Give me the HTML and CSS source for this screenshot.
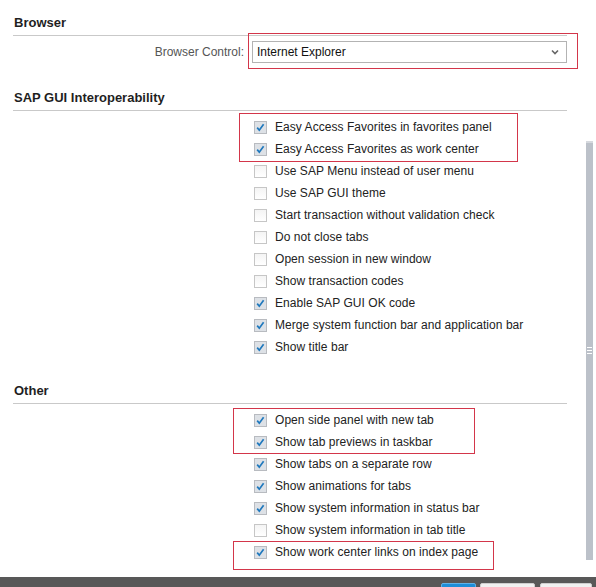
FILE: index.html
```html
<!DOCTYPE html>
<html lang="en">
<head>
<meta charset="utf-8">
<title>Settings</title>
<link rel="stylesheet" href="styles.css">
</head>
<body>
<div class="page">
  <main class="content">
    <section class="sec">
      <h2 class="sec-title">Browser</h2>
      <div class="sec-body">
        <div class="field">
          <label class="field-label">Browser Control:</label>
          <div class="select">
            <span>Internet Explorer</span>
            <svg class="chev" width="8" height="6" viewBox="0 0 8 6"><path d="M1 1.5 L4 4.5 L7 1.5" fill="none" stroke="#666" stroke-width="1.6"/></svg>
          </div>
        </div>
      </div>
    </section>

    <section class="sec">
      <h2 class="sec-title">SAP GUI Interoperability</h2>
      <div class="sec-body checks">
        <div class="check"><span class="cb on"><svg viewBox="0 0 11 11"><path d="M2.2 5.6 L4.3 8.2 L8.6 2.2" fill="none" stroke="#1f78bd" stroke-width="1.7"/></svg></span><span>Easy Access Favorites in favorites panel</span></div>
        <div class="check"><span class="cb on"><svg viewBox="0 0 11 11"><path d="M2.2 5.6 L4.3 8.2 L8.6 2.2" fill="none" stroke="#1f78bd" stroke-width="1.7"/></svg></span><span>Easy Access Favorites as work center</span></div>
        <div class="check"><span class="cb"></span><span>Use SAP Menu instead of user menu</span></div>
        <div class="check"><span class="cb"></span><span>Use SAP GUI theme</span></div>
        <div class="check"><span class="cb"></span><span>Start transaction without validation check</span></div>
        <div class="check"><span class="cb"></span><span>Do not close tabs</span></div>
        <div class="check"><span class="cb"></span><span>Open session in new window</span></div>
        <div class="check"><span class="cb"></span><span>Show transaction codes</span></div>
        <div class="check"><span class="cb on"><svg viewBox="0 0 11 11"><path d="M2.2 5.6 L4.3 8.2 L8.6 2.2" fill="none" stroke="#1f78bd" stroke-width="1.7"/></svg></span><span>Enable SAP GUI OK code</span></div>
        <div class="check"><span class="cb on"><svg viewBox="0 0 11 11"><path d="M2.2 5.6 L4.3 8.2 L8.6 2.2" fill="none" stroke="#1f78bd" stroke-width="1.7"/></svg></span><span>Merge system function bar and application bar</span></div>
        <div class="check"><span class="cb on"><svg viewBox="0 0 11 11"><path d="M2.2 5.6 L4.3 8.2 L8.6 2.2" fill="none" stroke="#1f78bd" stroke-width="1.7"/></svg></span><span>Show title bar</span></div>
      </div>
    </section>

    <section class="sec">
      <h2 class="sec-title">Other</h2>
      <div class="sec-body checks">
        <div class="check"><span class="cb on"><svg viewBox="0 0 11 11"><path d="M2.2 5.6 L4.3 8.2 L8.6 2.2" fill="none" stroke="#1f78bd" stroke-width="1.7"/></svg></span><span>Open side panel with new tab</span></div>
        <div class="check"><span class="cb on"><svg viewBox="0 0 11 11"><path d="M2.2 5.6 L4.3 8.2 L8.6 2.2" fill="none" stroke="#1f78bd" stroke-width="1.7"/></svg></span><span>Show tab previews in taskbar</span></div>
        <div class="check"><span class="cb on"><svg viewBox="0 0 11 11"><path d="M2.2 5.6 L4.3 8.2 L8.6 2.2" fill="none" stroke="#1f78bd" stroke-width="1.7"/></svg></span><span>Show tabs on a separate row</span></div>
        <div class="check"><span class="cb on"><svg viewBox="0 0 11 11"><path d="M2.2 5.6 L4.3 8.2 L8.6 2.2" fill="none" stroke="#1f78bd" stroke-width="1.7"/></svg></span><span>Show animations for tabs</span></div>
        <div class="check"><span class="cb on"><svg viewBox="0 0 11 11"><path d="M2.2 5.6 L4.3 8.2 L8.6 2.2" fill="none" stroke="#1f78bd" stroke-width="1.7"/></svg></span><span>Show system information in status bar</span></div>
        <div class="check"><span class="cb"></span><span>Show system information in tab title</span></div>
        <div class="check"><span class="cb on"><svg viewBox="0 0 11 11"><path d="M2.2 5.6 L4.3 8.2 L8.6 2.2" fill="none" stroke="#1f78bd" stroke-width="1.7"/></svg></span><span>Show work center links on index page</span></div>
      </div>
    </section>
  </main>

  <footer class="footer">
    <span class="btn primary"></span>
    <span class="btn wide"></span>
    <span class="btn"></span>
  </footer>

  <div class="scrollbar"><span class="grip"></span></div>

  <div class="mark mark-1"></div>
  <div class="mark mark-2"></div>
  <div class="mark mark-3"></div>
  <div class="mark mark-4"></div>
</div>
</body>
</html>
```

FILE: styles.css
```css
* { box-sizing: border-box; }

html, body {
  margin: 0;
  padding: 0;
  background: #ffffff;
}

body {
  font-family: "Liberation Sans", Arial, sans-serif;
  font-size: 12px;
  color: #222;
}

.page {
  position: relative;
  width: 596px;
  height: 587px;
  overflow: hidden;
  display: flex;
  flex-direction: column;
}

.content {
  flex: 1 1 0;
  min-height: 0;
  overflow: hidden;
  padding: 15px 0 0 13px;
}

.sec {
  width: 554px;
  margin-bottom: 25px;
}

.sec-title {
  margin: 0;
  font-size: 13px;
  font-weight: bold;
  line-height: 16px;
  color: #1f1f1f;
  padding: 0 0 4px 1px;
  border-bottom: 1px solid #c9c9c9;
}

.sec-body {
  margin-top: 5px;
}

.field {
  display: grid;
  grid-template-columns: 231px 315px;
  column-gap: 8px;
  align-items: start;
  min-height: 24px;
}

.field-label {
  text-align: right;
  color: #555;
  line-height: 22px;
}

.select {
  height: 22px;
  border: 1px solid #b3b3b3;
  background: #fff;
  display: flex;
  align-items: center;
  justify-content: space-between;
  padding: 0 7px 0 4px;
  color: #111;
}

.chev { display: block; }

.checks {
  padding-left: 241px;
}

.check {
  height: 22px;
  display: flex;
  align-items: center;
  gap: 8px;
  color: #222;
  white-space: nowrap;
  letter-spacing: 0.05px;
}

.cb {
  width: 13px;
  height: 13px;
  flex: none;
  border: 1px solid #c6c6c6;
  background: linear-gradient(#f4f4f4, #ffffff);
  display: flex;
  align-items: center;
  justify-content: center;
}

.cb.on {
  background: #dde1e6;
  border-color: #b8bbc0;
}

.cb svg {
  width: 11px;
  height: 11px;
  display: block;
}

.footer {
  height: 10px;
  flex: none;
  background: #585858;
  display: flex;
  justify-content: flex-end;
  align-items: flex-start;
  gap: 5px;
  padding: 6px 4px 0 0;
  overflow: hidden;
}

.btn {
  width: 52px;
  height: 20px;
  flex: none;
  background: #f1f1f1;
  border: 1px solid #cfcfcf;
  border-radius: 2px;
}

.btn.wide { width: 55px; }

.btn.primary {
  width: 35px;
  background: #1d8ed8;
  border-color: #5fb2e8;
  margin-right: -1px;
}

.scrollbar {
  position: absolute;
  left: 586px;
  top: 141px;
  width: 7px;
  height: 419px;
  background: #bcc1c9;
  border-top: 2px solid #d6d9de;
}

.grip {
  position: absolute;
  left: 1px;
  top: 204px;
  width: 5px;
  height: 9px;
  background: repeating-linear-gradient(#ffffff 0 1px, transparent 1px 3px);
}

.mark {
  position: absolute;
  border: 1px solid #d3364a;
  pointer-events: none;
}

.mark-1 { left: 248px; top: 33px; width: 330px; height: 36px; }
.mark-2 { left: 239px; top: 113px; width: 279px; height: 49px; }
.mark-3 { left: 233px; top: 408px; width: 242px; height: 46px; }
.mark-4 { left: 233px; top: 541px; width: 261px; height: 29px; }
```
